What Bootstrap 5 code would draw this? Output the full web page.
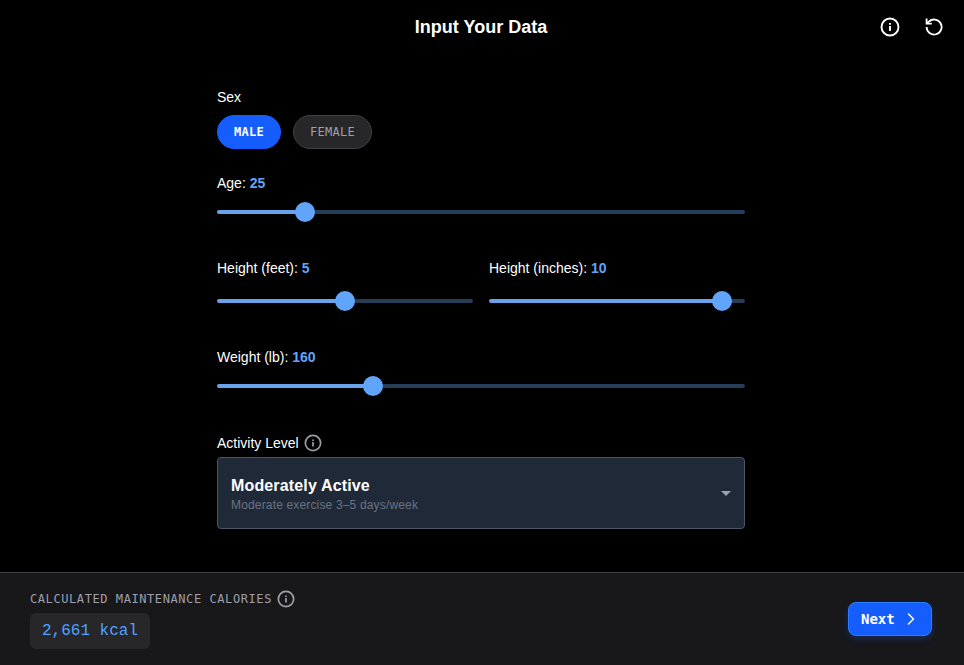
<!DOCTYPE html>
<html lang="en">
<head>
<meta charset="utf-8">
<meta name="viewport" content="width=device-width, initial-scale=1">
<title>Input Your Data</title>
<link href="https://cdn.jsdelivr.net/npm/bootstrap@5.3.0/dist/css/bootstrap.min.css" rel="stylesheet">
<style>
body{background:#000;color:#fff;font-family:"Liberation Sans",Arial,sans-serif;font-size:14px;line-height:20px;height:665px;overflow:hidden}
.mono{font-family:"DejaVu Sans Mono","Liberation Mono",monospace}
.topbar{height:54px;padding:0 20px 0 0}
.topbar h1{font-size:18px;line-height:28px;padding-left:18px}
.side{width:82px}
.icon-btn{width:20px;height:20px;color:#fff;line-height:0}
.form-col{width:528px;margin-left:217px;padding-top:33px}
.pill{height:34px;font-size:12px;letter-spacing:.28px;padding:0 16px;border-radius:17px;line-height:16px}
.pill-on,.pill-on:hover{background:#155dfc;border-color:#155dfc;color:#fff}
.pill-off{background:#27272a;border-color:#3f3f46;color:#9f9fa9}
.sex{margin-bottom:24px;gap:12px;margin-top:8px}
.val{color:#60a5fa}
.slider{height:20px}
.slider .rail-on{height:4px;background:#69a2ec;border-radius:4px 0 0 4px}
.slider .rail-off{height:4px;background:#263d5a;border-radius:0 4px 4px 0}
.slider .knob{width:20px;height:20px;margin:0 -10px;background:#60a5fa;z-index:1}
.age{margin-bottom:36px}
.age .slider,.weight .slider{margin-top:9px}
.heights{margin-bottom:36px;gap:16px}
.heights .slider{margin-top:13px}
.weight{margin-bottom:37px}
.muted-ic{color:#9b9ba3;margin-left:5px}
.level{height:72px;margin-top:4px;background:#202937;border:1px solid #4a5565;border-radius:4px;padding:0 13px}
.level-text{padding-top:2px}
.level-name{font-size:16px;line-height:22px;letter-spacing:.15px}
.level-sub{font-size:12px;line-height:16px;color:#6a7282;letter-spacing:.16px}
.footbar{height:93px;background:#18181b;border-top:1px solid #3f3f46;padding:0 32px 0 30px}
.caption{font-size:12px;letter-spacing:.58px;color:#9f9fa9;line-height:18px;gap:5px}
.kcal{width:120px;height:36px;background:#27272a;border-radius:6px;font-family:"Liberation Mono","Courier New",monospace;font-size:16px;color:#51a2ff;margin-top:5px;padding-left:12px}
.next,.next:hover{width:84px;height:34px;background:#155dfc;border:1px solid #2b7fff;border-radius:8px;font-size:14px;color:#fff;padding:0 12px;box-shadow:0 3px 6px rgba(21,93,252,.25)}
</style>
</head>
<body class="d-flex flex-column">
<svg class="d-none">
  <symbol id="info" viewBox="0 0 20 20"><circle cx="10" cy="10" r="8.5" fill="none" stroke="currentColor" stroke-width="1.9"/><path d="M10 9v5M10 6v1.8" fill="none" stroke="currentColor" stroke-width="1.9"/></symbol>
</svg>
<header class="topbar d-flex align-items-center justify-content-between">
  <div class="side"></div>
  <h1 class="fw-bold m-0">Input Your Data</h1>
  <div class="side d-flex justify-content-end gap-4">
    <button class="icon-btn btn p-0 border-0" aria-label="Info"><svg width="20" height="20"><use href="#info"/></svg></button>
    <button class="icon-btn btn p-0 border-0" aria-label="Reset"><svg width="20" height="20" viewBox="0 0 20 20" fill="none" stroke="currentColor" stroke-width="1.8"><path d="M2.6 10a7.5 7.5 0 1 0 2.2-5.3L2.8 6.5"/><path d="M2.6 1.4v5.2h5.2"/></svg></button>
  </div>
</header>
<main class="form-col flex-grow-1">
  <div>Sex</div>
  <div class="sex d-flex">
    <button class="btn pill pill-on mono fw-bold">MALE</button>
    <button class="btn pill pill-off mono">FEMALE</button>
  </div>
  <div class="age">
    <div>Age: <span class="val fw-bold">25</span></div>
    <div class="slider d-flex align-items-center"><div class="rail-on" style="width:16.67%"></div><div class="knob rounded-circle flex-shrink-0"></div><div class="rail-off flex-grow-1"></div></div>
  </div>
  <div class="heights d-flex">
    <div class="flex-fill w-50">
      <div>Height (feet): <span class="val fw-bold">5</span></div>
      <div class="slider d-flex align-items-center"><div class="rail-on" style="width:50%"></div><div class="knob rounded-circle flex-shrink-0"></div><div class="rail-off flex-grow-1"></div></div>
    </div>
    <div class="flex-fill w-50">
      <div>Height (inches): <span class="val fw-bold">10</span></div>
      <div class="slider d-flex align-items-center"><div class="rail-on" style="width:90.91%"></div><div class="knob rounded-circle flex-shrink-0"></div><div class="rail-off flex-grow-1"></div></div>
    </div>
  </div>
  <div class="weight">
    <div>Weight (lb): <span class="val fw-bold">160</span></div>
    <div class="slider d-flex align-items-center"><div class="rail-on" style="width:29.5%"></div><div class="knob rounded-circle flex-shrink-0"></div><div class="rail-off flex-grow-1"></div></div>
  </div>
  <div class="d-flex align-items-center"><span>Activity Level</span><svg class="muted-ic" width="18" height="18"><use href="#info"/></svg></div>
  <div class="level d-flex align-items-center justify-content-between">
    <div class="level-text">
      <div class="level-name fw-bold">Moderately Active</div>
      <div class="level-sub">Moderate exercise 3–5 days/week</div>
    </div>
    <svg width="10" height="5" viewBox="0 0 10 5" fill="#99a1af"><path d="M0 0h10L5 5z"/></svg>
  </div>
</main>
<footer class="footbar d-flex align-items-center justify-content-between flex-shrink-0">
  <div>
    <div class="caption mono d-flex align-items-center"><span>CALCULATED MAINTENANCE CALORIES</span><svg width="18" height="18"><use href="#info"/></svg></div>
    <div class="kcal d-flex align-items-center">2,661 kcal</div>
  </div>
  <button class="btn next mono fw-bold d-flex align-items-center justify-content-between">Next<svg width="16" height="16" viewBox="0 0 16 16" fill="none" stroke="currentColor" stroke-width="1.5" stroke-linecap="round" stroke-linejoin="round"><path d="M5.5 3l5 5-5 5"/></svg></button>
</footer>
<script src="https://cdn.jsdelivr.net/npm/bootstrap@5.3.0/dist/js/bootstrap.bundle.min.js"></script>
</body>
</html>
